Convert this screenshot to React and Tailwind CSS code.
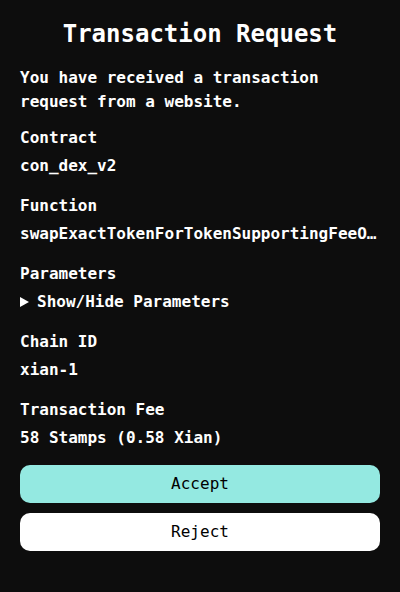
import React from "react"

const Field = ({ label, children, className = "" }) => (
    <div className={className}>
        <div className="leading-6">{label}</div>
        <div className="mt-1 leading-6 truncate">{children}</div>
    </div>
)

export default function App() {
    return (
        <div
            className="min-h-screen bg-[#0d0d0d] text-white px-5 pt-[18px] text-base font-bold"
            style={{ fontFamily: '"DejaVu Sans Mono", "Liberation Mono", monospace' }}
        >
            <h1 className="text-2xl leading-8 text-center">Transaction Request</h1>

            <p className="mt-4 leading-6">You have received a transaction request from a website.</p>

            <Field label="Contract" className="mt-3">con_dex_v2</Field>
            <Field label="Function" className="mt-4">swapExactTokenForTokenSupportingFeeOnTransferTokens</Field>

            <div className="mt-4">
                <div className="leading-6">Parameters</div>
                <div className="mt-1 leading-6 flex items-center">
                    <svg width="9" height="10" viewBox="0 0 9 10" className="mr-2 shrink-0">
                        <path d="M0 0 L9 5 L0 10 Z" fill="white" />
                    </svg>
                    <span>Show/Hide Parameters</span>
                </div>
            </div>

            <Field label="Chain ID" className="mt-4">xian-1</Field>
            <Field label="Transaction Fee" className="mt-4">58 Stamps (0.58 Xian)</Field>

            <button className="mt-[15px] w-full h-[38px] rounded-[10px] bg-[#94e9e1] text-black font-normal">
                Accept
            </button>
            <button className="mt-2.5 w-full h-[38px] rounded-[10px] bg-white text-black font-normal">
                Reject
            </button>
        </div>
    )
}
